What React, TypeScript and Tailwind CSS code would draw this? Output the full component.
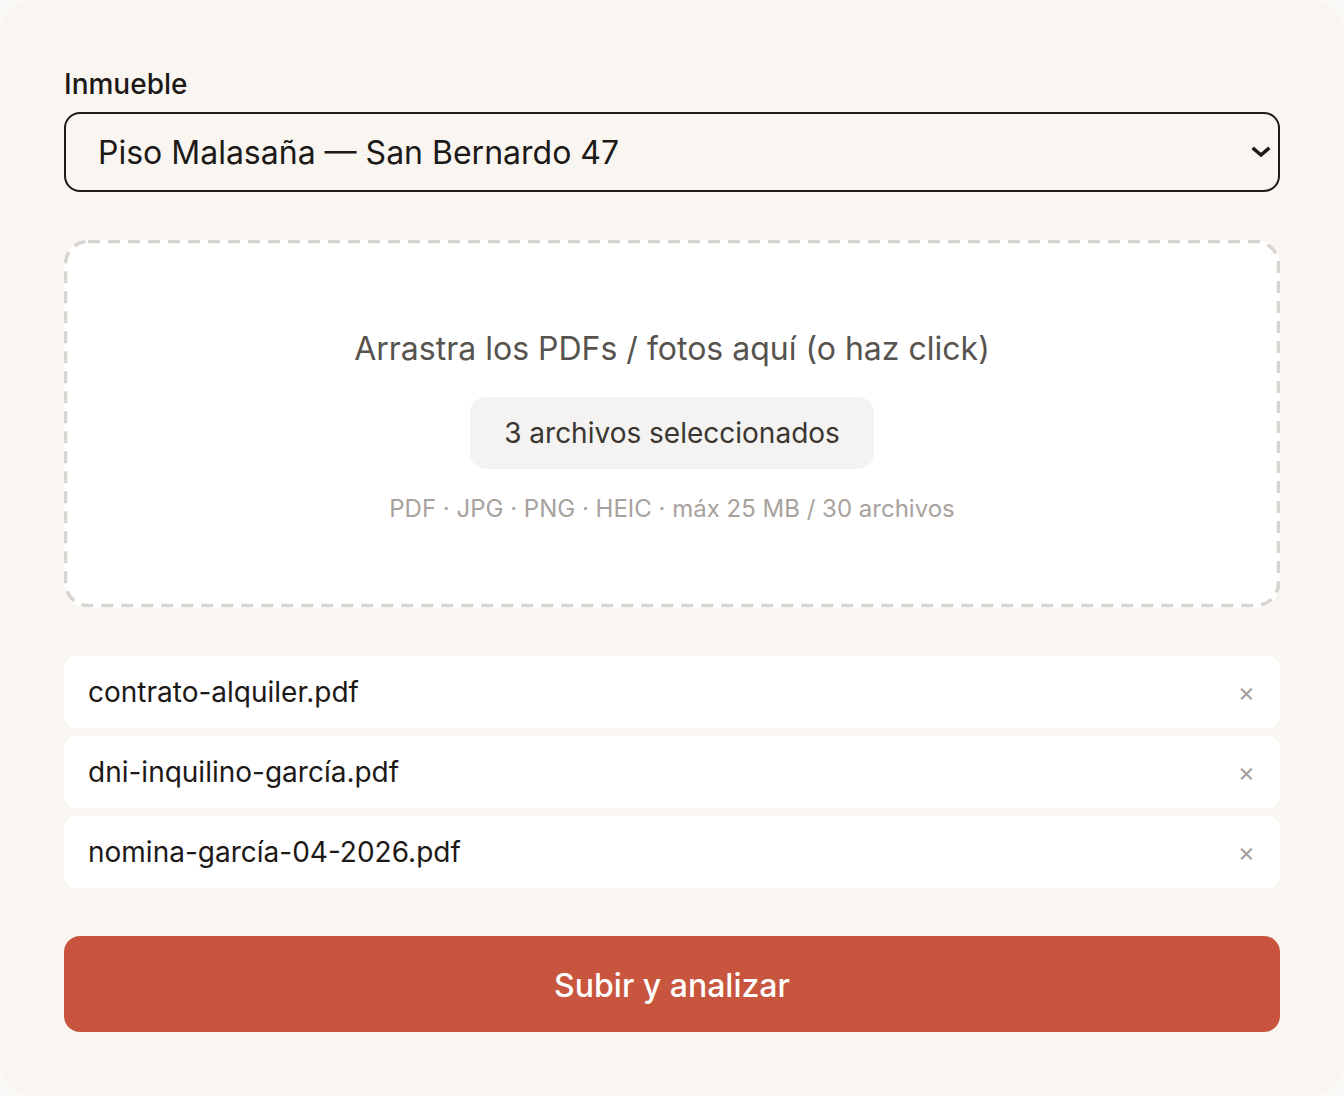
import React from 'react';

const files = ['contrato-alquiler.pdf', 'dni-inquilino-garcía.pdf', 'nomina-garcía-04-2026.pdf'];

export default function App() {
    return (
        <div className="min-h-screen w-full bg-[#fbfaf8]" style={{ fontFamily: 'Inter, "Noto Sans", sans-serif' }}>
            <div className="flex h-[1096px] w-[1344px] flex-col rounded-[32px] bg-[#f9f6f1] px-16 pt-[64px] pb-16">
                <label className="mb-2 text-[28px] leading-[40px] font-medium text-[#1c1917]">Inmueble</label>
                <div className="relative flex h-20 items-center rounded-2xl border-2 border-[#1c1917] pt-[2px] pl-[32px] text-[32px] text-[#1c1917]">
                    Piso Malasaña — San Bernardo 47
                    <svg className="absolute right-[7px] top-1/2 -translate-y-1/2" width="20" height="14" viewBox="0 0 20 14" fill="none">
                        <path d="M3 4l7 6 7-6" stroke="#1c1917" strokeWidth="3.5" strokeLinecap="square" />
                    </svg>
                </div>

                <div className="relative mt-12 flex h-[368px] shrink-0 flex-col items-center justify-center rounded-3xl bg-white pt-[6px]">
                    {/* dashed outline */}
                    <svg className="pointer-events-none absolute inset-0" width="1216" height="368" fill="none">
                        <rect x="1.5" y="1.5" width="1213" height="364" rx="22.5" stroke="#d8d5d0" strokeWidth="3.5" strokeDasharray="12 8" />
                    </svg>
                    <p className="text-[32px] leading-[44px] text-[#57534e]">Arrastra los PDFs / fotos aquí (o haz click)</p>
                    <div className="mt-[26px] flex h-[72px] w-[404px] items-center justify-center rounded-2xl bg-[#f4f3f1] text-[28px] text-[#3a3632]">
                        3 archivos seleccionados
                    </div>
                    <p className="mt-[22px] text-[24px] leading-[36px] text-[#a8a29e]">PDF · JPG · PNG · HEIC · máx 25 MB / 30 archivos</p>
                </div>

                <div className="mt-12 flex flex-col gap-2">
                    {files.map(f => (
                        <div key={f} className="flex h-[72px] items-center justify-between rounded-xl bg-white pl-6 pr-[25px]">
                            <span className="text-[28px] text-[#1c1917]">{f}</span>
                            <span className="text-[26px] leading-none text-[#a8a29e]">×</span>
                        </div>
                    ))}
                </div>

                <button className="mt-12 flex h-24 shrink-0 items-center justify-center rounded-2xl bg-[#c8563e] pt-1 text-[32px] font-medium text-white">
                    Subir y analizar
                </button>
            </div>
        </div>
    );
}
